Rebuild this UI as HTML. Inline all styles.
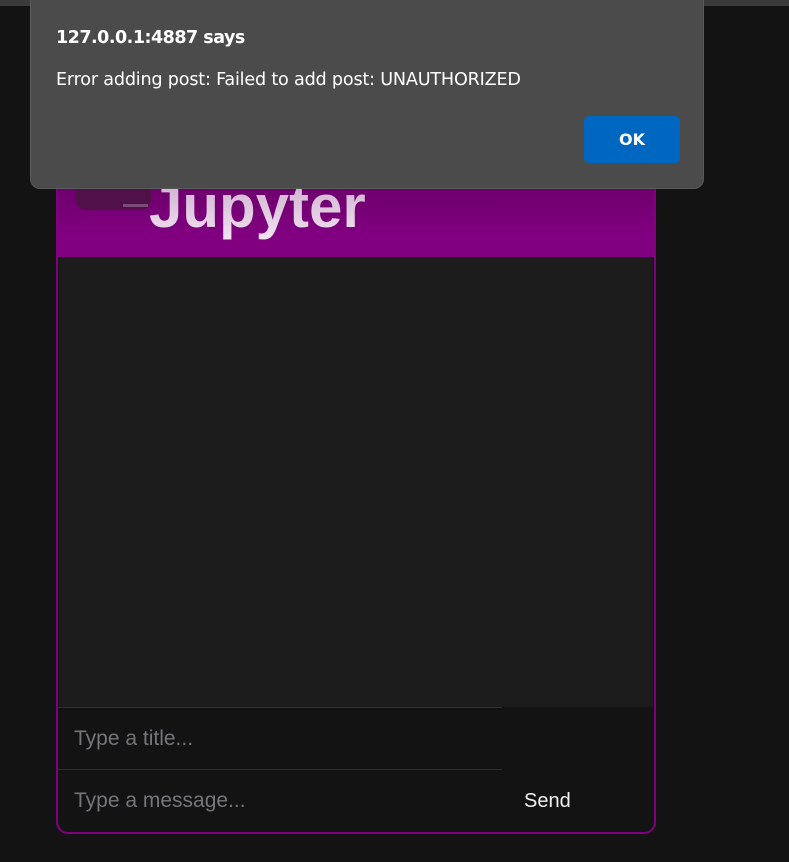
<!DOCTYPE html>
<html><head><meta charset="utf-8"><style>
*{box-sizing:border-box;margin:0;padding:0}
body{width:789px;height:862px;background:#131313;position:relative;overflow:hidden;font-family:"Liberation Sans",sans-serif}
.strip{position:absolute;left:0;top:0;width:789px;height:6px;background:#3a3a3a}
.card{position:absolute;left:56px;top:100px;width:600px;height:734px;border:2px solid #800080;border-radius:12px;overflow:hidden;background:#131313}
.hdr{position:absolute;left:0;top:0;width:100%;height:155px;background:linear-gradient(#4a0048,#800080 85%)}
.logo{position:absolute;left:18px;top:60px;width:75px;height:48px;background:#501048;border-radius:10px;overflow:hidden}
.logo:before{content:"";position:absolute;left:28px;top:-8px;width:24px;height:14px;border-radius:50%;background:#c04020}
.logo:after{content:"";position:absolute;left:47px;top:42px;width:25px;height:3px;background:#7a4a78}
.title{position:absolute;left:91px;top:70px;font-weight:bold;font-size:60px;background:linear-gradient(#c9a9c9,#f2e4f2);-webkit-background-clip:text;color:transparent}
.chat{position:absolute;left:1px;top:155px;width:594px;height:450px;background:#1c1c1c}
.in{position:absolute;left:0;width:444px;height:62px;border-top:1px solid #4a1a4a;color:#75757a;font-size:21px;padding:19px 0 0 16px}
.send{position:absolute;left:466px;top:688px;color:#f0f0f0;font-size:20px}
.dlg{position:absolute;left:30px;top:0;width:674px;height:189px;background:#4b4b4b;border-radius:0 0 10px 10px;border:1px solid #5a5a5a;border-top:none;font-family:"DejaVu Sans","Liberation Sans",sans-serif;color:#fff}
.dlg h1{position:absolute;left:25px;top:28px;font-size:17.5px;font-weight:bold;letter-spacing:-0.5px}
.dlg p{position:absolute;left:25px;top:70px;font-size:17.6px;letter-spacing:-0.2px}
.ok{position:absolute;left:553px;top:116px;width:96px;height:47px;background:#0067c0;border-radius:5px;text-align:center;line-height:47px;font-weight:bold;font-size:16px}
</style></head><body>
<div class="strip"></div>
<div class="card">
 <div class="hdr"><div class="logo"></div><div class="title">Jupyter</div></div>
 <div class="chat"></div>
 <div class="in" style="top:605px">Type a title...</div>
 <div class="in" style="top:667px">Type a message...</div>
 <div class="send">Send</div>
</div>
<div class="dlg">
 <h1>127.0.0.1:4887 says</h1>
 <p>Error adding post: Failed to add post: UNAUTHORIZED</p>
 <div class="ok">OK</div>
</div>
</body></html>
